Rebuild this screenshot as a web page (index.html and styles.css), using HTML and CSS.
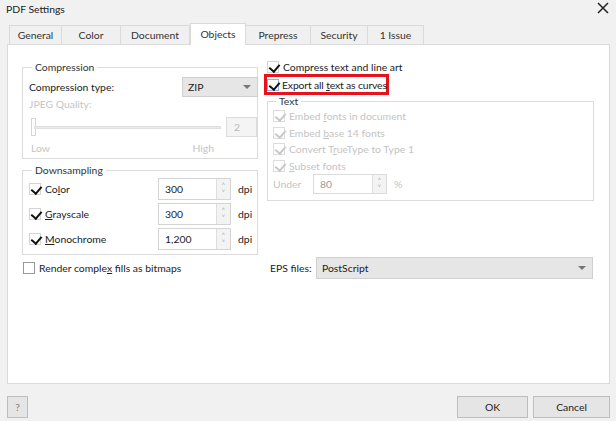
FILE: index.html
```html
<!DOCTYPE html>
<html>
<head>
    <title>PDF Settings</title>
    <link rel="stylesheet" href="styles.css">
</head>
<body>
    <div class="dialog">
        <!-- Title bar -->
        <div class="titlebar">
            <span class="title">PDF Settings</span>
            <span class="close">
                <svg width="12" height="12" viewBox="0 0 12 12"><path d="M1 1 L11 11 M11 1 L1 11" stroke="#222" stroke-width="1.5"/></svg>
            </span>
        </div>

        <!-- Tabs -->
        <div class="tabs">
            <div class="tab" style="width: 53px">General</div>
            <div class="tab" style="width: 59px">Color</div>
            <div class="tab" style="width: 69px">Document</div>
            <div class="tab active" style="width: 56px">Objects</div>
            <div class="tab" style="width: 65px">Prepress</div>
            <div class="tab" style="width: 57px">Security</div>
            <div class="tab" style="width: 56px">1 Issue</div>
        </div>

        <div class="panel">
            <!-- Left column -->
            <div class="col-left">
                <fieldset class="group compression">
                    <legend>Compression</legend>
                    <div class="row type-row">
                        <span class="label">Compression type:</span>
                        <div class="select small"><span>ZIP</span><span class="arrow"></span></div>
                    </div>
                    <div class="disabled jpeg-label">JPEG Quality:</div>
                    <div class="row slider-row">
                        <div class="slider">
                            <div class="thumb"></div>
                            <div class="track"></div>
                        </div>
                        <div class="numbox">2</div>
                    </div>
                    <div class="row ticks disabled">
                        <span>Low</span>
                        <span>High</span>
                    </div>
                </fieldset>

                <fieldset class="group downsampling">
                    <legend>Downsampling</legend>
                    <div class="row ds-row">
                        <label class="check"><span class="box on"></span><span>Co<u>l</u>or</span></label>
                        <div class="spin"><span class="val">300</span><span class="btns"><i>&#708;</i><i>&#709;</i></span></div>
                        <span class="unit">dpi</span>
                    </div>
                    <div class="row ds-row">
                        <label class="check"><span class="box on"></span><span><u>G</u>rayscale</span></label>
                        <div class="spin"><span class="val">300</span><span class="btns"><i>&#708;</i><i>&#709;</i></span></div>
                        <span class="unit">dpi</span>
                    </div>
                    <div class="row ds-row">
                        <label class="check"><span class="box on"></span><span><u>M</u>onochrome</span></label>
                        <div class="spin"><span class="val">1,200</span><span class="btns"><i>&#708;</i><i>&#709;</i></span></div>
                        <span class="unit">dpi</span>
                    </div>
                </fieldset>

                <label class="check render"><span class="box"></span><span>Render comple<u>x</u> fills as bitmaps</span></label>
            </div>

            <!-- Right column -->
            <div class="col-right">
                <label class="check compress"><span class="box on"></span><span>Compress text and line art</span></label>
                <div class="highlight">
                    <label class="check"><span class="box on focus"></span><span>Export all <u>t</u>ext as curves</span></label>
                </div>
                <fieldset class="group text-group">
                    <legend>Text</legend>
                    <label class="check disabled"><span class="box on"></span><span>Embed <u>f</u>onts in document</span></label>
                    <label class="check disabled"><span class="box on"></span><span>Embed <u>b</u>ase 14 fonts</span></label>
                    <label class="check disabled"><span class="box on"></span><span>Convert T<u>r</u>ueType to Type 1</span></label>
                    <label class="check disabled"><span class="box on"></span><span><u>S</u>ubset fonts</span></label>
                    <div class="row under disabled">
                        <span class="under-label">Under</span>
                        <div class="spin"><span class="val">80</span><span class="btns"><i>&#708;</i><i>&#709;</i></span></div>
                        <span class="unit">%</span>
                    </div>
                </fieldset>
                <div class="row eps">
                    <span class="label">EPS files:</span>
                    <div class="select wide"><span>PostScript</span><span class="arrow"></span></div>
                </div>
            </div>
        </div>

        <!-- Footer -->
        <div class="footer">
            <button class="btn help">?</button>
            <div class="actions">
                <button class="btn">OK</button>
                <button class="btn">Cancel</button>
            </div>
        </div>
    </div>
</body>
</html>
```

FILE: styles.css
```css
* { box-sizing: border-box; }
body {
    margin: 0;
    background: #f1f1f1;
    font-family: Lato, "Noto Sans", sans-serif;
    font-size: 10.4px;
    line-height: 14px;
    color: #222;
}
.dialog {
    width: 616px;
    height: 421px;
    display: flex;
    flex-direction: column;
}
.titlebar {
    height: 22px;
    display: flex;
    justify-content: space-between;
    align-items: flex-start;
    padding: 2px 7px 0 6px;
}
.title { color: #222; }
.close { display: flex; margin-top: 0; }

.tabs {
    display: flex;
    align-items: flex-end;
    height: 22px;
    margin-left: 9px;
    position: relative;
    z-index: 1;
}
.tab {
    height: 19px;
    line-height: 18px;
    text-align: center;
    border: 1px solid #dadada;
    border-bottom: none;
    border-left: none;
    background: #f0f0f0;
    color: #333;
}
.tab:first-child { border-left: 1px solid #dadada; }
.tab.active {
    height: 22px;
    line-height: 21px;
    background: #fff;
    border-left: 1px solid #dadada;
    margin-left: 0;
    margin-bottom: -1px;
}
.tab.active + .tab { border-left: none; }

.panel {
    height: 340px;
    margin: 0 6px 0 7px;
    background: #fff;
    border: 1px solid #dadada;
    display: flex;
}
.col-left {
    width: 236px;
    margin-left: 14px;
    padding-top: 15px;
}
.col-right {
    width: 330px;
    margin-left: 6px;
    padding-top: 15px;
}

.group {
    border: 1px solid #dcdcdc;
    margin: 0;
    padding: 0 0 3px 6px;
    min-width: 0;
}
.group legend {
    padding: 0 3px;
    margin-left: 3px;
    line-height: 14px;
    color: #333;
}
.row { display: flex; align-items: center; }
.label { color: #222; }
.disabled, .disabled .label { color: #c4c4c4; }

.compression { padding-right: 0; }
.type-row { justify-content: space-between; margin-top: 3px; }
.select.small { margin-right: -1px; }
.jpeg-label { height: 14px; }
.slider-row { margin-top: 6px; justify-content: space-between; }
.slider {
    width: 190px;
    height: 20px;
    display: flex;
    align-items: center;
    margin-left: 2px;
}
.track { flex: 1; height: 3px; background: #e9e9e9; border: 1px solid #e0e0e0; }
.thumb { width: 5px; height: 18px; border: 1px solid #d6d6d6; background: #fff; margin-right: -2px; }
.numbox {
    width: 31px;
    height: 20px;
    line-height: 18px;
    padding-left: 7px;
    border: 1px solid #dcdcdc;
    background: #f4f4f4;
    color: #b8b8b8;
}
.ticks { justify-content: space-between; width: 185px; margin-top: 4px; padding-left: 2px; }

.select {
    height: 20px;
    line-height: 18px;
    background: #e6e6e6;
    border: 1px solid #cfcfcf;
    padding-left: 5px;
    display: flex;
    justify-content: space-between;
    align-items: center;
    color: #222;
}
.select.small { width: 76px; }
.select.wide { width: 277px; height: 22px; }
.arrow {
    width: 0;
    height: 0;
    border-left: 4px solid transparent;
    border-right: 4px solid transparent;
    border-top: 4px solid #777;
    margin-right: 6px;
}

.downsampling { margin-top: 4px; }
.ds-row { height: 25px; }
.ds-row:first-of-type { margin-top: -1px; }
.ds-row .check { width: 129px; }

.spin {
    display: flex;
    height: 22px;
    border: 1px solid #d4d4d4;
    background: #fff;
}
.spin .val { width: 57px; padding-left: 6px; line-height: 20px; }
.spin .btns {
    width: 14px;
    border-left: 1px solid #dedede;
    background: #f3f3f3;
    display: flex;
    flex-direction: column;
    align-items: center;
    justify-content: center;
    color: #aaa;
    font-size: 7px;
    line-height: 7px;
}
.spin .btns i { font-style: normal; }
.unit { margin-left: 7px; }

.check { display: flex; align-items: center; white-space: nowrap; }
.box {
    width: 12px;
    height: 12px;
    border: 1px solid #d4d4d4;
    background: #fff;
    margin-right: 4px;
    position: relative;
    flex-shrink: 0;
}
.box.on::after {
    content: "";
    position: absolute;
    left: 3px;
    top: 0px;
    width: 5px;
    height: 8px;
    border-right: 2px solid #111;
    border-bottom: 2px solid #111;
    transform: rotate(40deg);
}
.box.focus { border-color: #8ab8e6; }
.render { margin-top: 6px; margin-left: 1px; }
.render .box { border-color: #999; }

.compress { margin-left: 3px; height: 14px; }
.highlight {
    width: 125px;
    height: 21px;
    border: 3px solid #e8121c;
    display: flex;
    align-items: center;
}
.highlight .check { letter-spacing: -0.15px; }
.highlight .box { margin-right: 3px; }
.text-group { width: 327px; margin: -1px 0 0 3px; padding: 0 0 6px 5px; }
.text-group .check { height: 16.5px; }
.disabled .box { border-color: #dcdcdc; }
.disabled .box.on::after { border-color: #c8c8c8; }
.under { margin-top: 0; }
.under-label { width: 40px; }
.under .spin { height: 20px; border-color: #dcdcdc; }
.under .spin .val { width: 58px; color: #999; line-height: 18px; }
.eps { margin-top: 56px; margin-left: 6px; }
.eps .label { width: 46px; }

.footer {
    flex: 1;
    display: flex;
    justify-content: space-between;
    align-items: flex-start;
    padding: 12px 6px 0 7px;
}
.btn {
    font-family: inherit;
    font-size: 10.4px;
    background: #e5e5e5;
    border: 1px solid #bdbdbd;
    color: #222;
    height: 22px;
    padding: 0;
}
.help { width: 21px; color: #777; }
.actions { display: flex; gap: 5px; }
.actions .btn { width: 71px; }
.actions .btn:last-child { width: 77px; }
```
